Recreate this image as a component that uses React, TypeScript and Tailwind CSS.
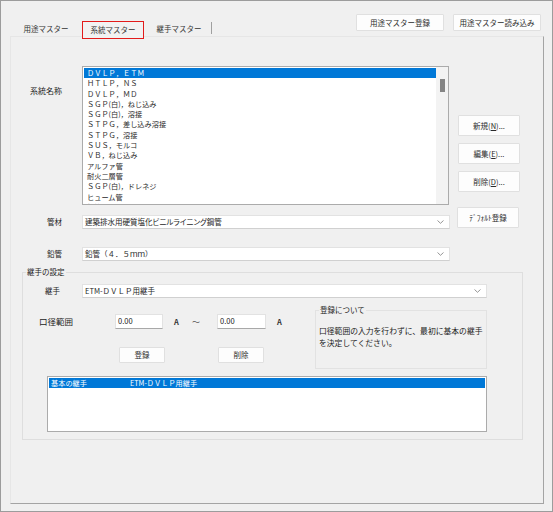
import React from 'react'

const FONT = { fontFamily: '"Noto Sans CJK JP", "Noto Sans", sans-serif' }

const systemItems = [
  'ＤＶＬＰ，ＥＴＭ',
  'ＨＴＬＰ，ＮＳ',
  'ＤＶＬＰ，ＭＤ',
  'ＳＧＰ(白)，ねじ込み',
  'ＳＧＰ(白)，溶接',
  'ＳＴＰＧ，差し込み溶接',
  'ＳＴＰＧ，溶接',
  'ＳＵＳ，モルコ',
  'ＶＢ，ねじ込み',
  'アルファ管',
  '耐火二層管',
  'ＳＧＰ(白)，ドレネジ',
  'ヒューム管',
  '鉛管',
]

const Chevron = () => (
  <svg width="7" height="4" viewBox="0 0 7 4" className="shrink-0">
    <path d="M0.5 0.5 L3.5 3.3 L6.5 0.5" fill="none" stroke="#8a8a8a" strokeWidth="0.9" />
  </svg>
)

const Combo = ({ text, width, narrow }: { text: string; width: string; narrow?: boolean }) => (
  <div className={`${width} h-[14px] bg-white border border-[#e2e2e2] border-b-[#d0d0d0] flex items-center justify-between pl-[2px] pr-[5px]`}>
    <span className={`text-[7.5px] leading-[12px] text-[#1e1e1e] whitespace-nowrap ${narrow ? "[font-feature-settings:'palt']" : ''}`}>{text}</span>
    <Chevron />
  </div>
)

const Btn = ({ children, className }: { children: React.ReactNode; className: string }) => (
  <div className={`${className} bg-[#fdfdfd] border border-[#e0e0e0] rounded-[1px] flex items-center justify-center text-[7.5px] text-[#2a2a2a] whitespace-nowrap`}>
    {children}
  </div>
)

export default function App() {
  return (
    <div style={FONT} className="w-[553px] h-[512px] bg-[#f0f0f0] border border-[#9c9c9c] flex flex-col">
      {/* header: tabs + top buttons */}
      <div className="h-[35px] flex justify-between">
        <div className="flex items-end pl-[11px]">
          <div className="w-[68px] h-[15px] flex items-center justify-center text-[7.5px] text-[#333]">用途マスター</div>
          <div className="relative z-10 ml-[2px] w-[62px] h-[18px] -mb-[3px] bg-[#f2f2f2] border-[1.5px] border-[#e21b1b] flex items-center justify-center text-[7.5px] text-[#333]">
            系統マスター
          </div>
          <div className="ml-[4px] w-[62px] h-[15px] flex items-center justify-center text-[7.5px] text-[#333]">継手マスター</div>
          <div className="ml-[1px] mb-[2px] w-px h-[12px] bg-[#a0a0a0]" />
        </div>
        <div className="flex items-start gap-[9px] pt-[13px] pr-[11px]">
          <Btn className="w-[88px] h-[17px]">用途マスター登録</Btn>
          <Btn className="w-[88px] h-[17px]">用途マスター読み込み</Btn>
        </div>
      </div>

      {/* tab page */}
      <div className="ml-[9px] w-[534px] h-[468px] border-t border-l border-[#e6e6e6] border-r border-b border-r-[#a4a4a4] border-b-[#a4a4a4] flex flex-col">
        {/* 系統名称 */}
        <div className="flex mt-[29px]">
          <div className="w-[71px] pt-[19px] pr-[20px] text-right text-[8px] leading-[12px] text-[#222]">系統名称</div>
          <div className="w-[367px] h-[139px] bg-white border border-[#ababab] flex overflow-hidden">
            <div className="flex-1 pt-px pl-px">
              {systemItems.map((item, i) => (
                <div
                  key={item}
                  className={`h-[10.3px] pl-[3px] text-[7.2px] leading-[10.3px] whitespace-nowrap ${i === 0 ? 'bg-[#0078d7] text-white' : 'text-[#2a2a2a]'}`}
                >
                  {item}
                </div>
              ))}
            </div>
            <div className="w-[12px] bg-[#f3f3f3] flex justify-center pt-[12px]">
              <div className="w-[5px] h-[13px] bg-[#858585]" />
            </div>
          </div>
          <div className="ml-[9px] pt-[49px] flex flex-col gap-[7px]">
            <Btn className="w-[62px] h-[21px]">
              新規(<span className="underline">N</span>)...
            </Btn>
            <Btn className="w-[62px] h-[21px]">
              編集(<span className="underline">E</span>)...
            </Btn>
            <Btn className="w-[62px] h-[21px]">
              削除(<span className="underline">D</span>)...
            </Btn>
          </div>
        </div>

        {/* 管材 */}
        <div className="flex items-start mt-[2px]">
          <div className="w-[71px] mt-[8px] pr-[20px] text-right text-[7.5px] leading-[14px] text-[#222]">管材</div>
          <div className="mt-[8px]">
            <Combo text="建築排水用硬質塩化ビニルライニング鋼管" width="w-[368px]" narrow />
          </div>
          <Btn className="ml-[7px] w-[62px] h-[21px]">ﾃﾞﾌｫﾙﾄ登録</Btn>
        </div>

        {/* 鉛管 */}
        <div className="flex items-center mt-[18px]">
          <div className="w-[71px] pr-[20px] text-right text-[7.5px] leading-[14px] text-[#222]">鉛管</div>
          <Combo text="鉛管（４．５ｍｍ）" width="w-[368px]" />
        </div>

        {/* 継手の設定 */}
        <fieldset className="ml-[11px] mt-[5px] w-[501px] border border-[#dedede] pb-[7px]">
          <legend className="ml-[3px] px-px text-[7.5px] leading-[12px] text-[#222]">継手の設定</legend>

          <div className="flex items-center mt-[6px]">
            <div className="w-[59px] pr-[22px] text-right text-[7.5px] leading-[14px] text-[#222]">継手</div>
            <Combo text="ETM-ＤＶＬＰ用継手" width="w-[405px]" />
          </div>

          <div className="flex mt-[6px]">
            <div className="w-[292px] flex flex-col">
              <div className="flex items-center mt-[10px]">
                <div className="w-[92px] pl-[16px] text-[8.5px] leading-[15px] text-[#222]">口径範囲</div>
                <div className="w-[48px] h-[15px] bg-white border border-[#e2e2e2] border-b-[#a8a8a8] pl-[2px] text-[7.5px] leading-[12px] text-[#222]">0.00</div>
                <div className="w-[21px] pl-[11px] text-[7.5px] font-bold text-[#333]">A</div>
                <div className="w-[33px] pl-[8px] text-[8px] text-[#555]">～</div>
                <div className="w-[49px] h-[15px] bg-white border border-[#e2e2e2] border-b-[#a8a8a8] pl-[2px] text-[7.5px] leading-[12px] text-[#222]">0.00</div>
                <div className="pl-[11px] text-[7.5px] font-bold text-[#333]">A</div>
              </div>
              <div className="flex mt-[18px] pl-[96px]">
                <Btn className="w-[46px] h-[16px]">登録</Btn>
                <Btn className="ml-[53px] w-[46px] h-[16px]">削除</Btn>
              </div>
            </div>
            <fieldset className="w-[172px] h-[65px] border border-[#e2e2e2]">
              <legend className="ml-[3px] px-px text-[7.5px] leading-[12px] text-[#222]">登録について</legend>
              <div className="mt-[9px] pl-[3px] text-[7.8px] leading-[12px] text-[#222] whitespace-nowrap">
                口径範囲の入力を行わずに、最初に基本の継手
                <br />
                を決定してください。
              </div>
            </fieldset>
          </div>

          <div className="ml-[24px] mt-[7px] w-[440px] h-[56px] bg-white border border-[#ababab] pt-px px-px">
            <div className="h-[10px] bg-[#0078d7] flex text-[7.2px] leading-[10px] text-white whitespace-nowrap">
              <span className="w-[81px] pl-[2px]">基本の継手</span>
              <span>ETM-ＤＶＬＰ用継手</span>
            </div>
          </div>
        </fieldset>
      </div>
    </div>
  )
}
